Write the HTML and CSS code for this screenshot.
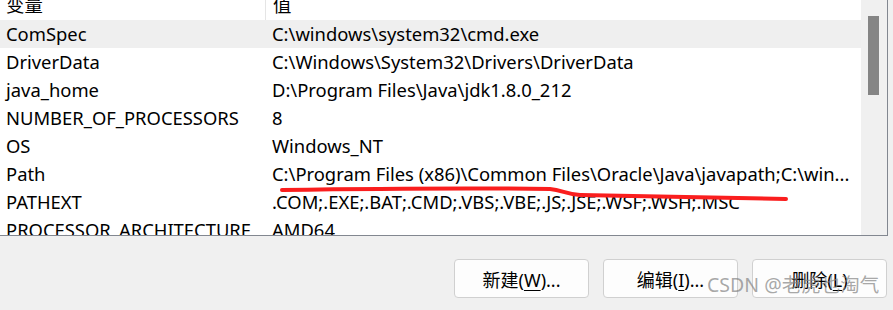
FILE: index.html
```html
<!DOCTYPE html>
<html lang="zh-CN">
<head>
<meta charset="utf-8">
<title>环境变量</title>
<link rel="stylesheet" href="styles.css">
</head>
<body>
<div class="page">
  <div class="listbox">
    <div class="list">
      <div class="row header"><div class="c1">变量</div><div class="c2">值</div></div>
      <div class="row selected"><div class="c1">ComSpec</div><div class="c2">C:\windows\system32\cmd.exe</div></div>
      <div class="row"><div class="c1">DriverData</div><div class="c2">C:\Windows\System32\Drivers\DriverData</div></div>
      <div class="row"><div class="c1">java_home</div><div class="c2">D:\Program Files\Java\jdk1.8.0_212</div></div>
      <div class="row"><div class="c1">NUMBER_OF_PROCESSORS</div><div class="c2">8</div></div>
      <div class="row"><div class="c1">OS</div><div class="c2">Windows_NT</div></div>
      <div class="row"><div class="c1">Path</div><div class="c2">C:\Program Files (x86)\Common Files\Oracle\Java\javapath;C:\win...</div></div>
      <div class="row"><div class="c1">PATHEXT</div><div class="c2">.COM;.EXE;.BAT;.CMD;.VBS;.VBE;.JS;.JSE;.WSF;.WSH;.MSC</div></div>
      <div class="row"><div class="c1">PROCESSOR_ARCHITECTURE</div><div class="c2">AMD64</div></div>
    </div>
    <div class="scrollbar"><div class="thumb"></div></div>
    <svg class="mark" width="893" height="240" viewBox="0 0 893 240">
      <path d="M282 190 C 350 189, 480 188, 550 189 C 562 190, 566 194, 580 195 C 650 196, 720 198, 786 199" fill="none" stroke="#fa1e1e" stroke-width="4" stroke-linecap="round"/>
    </svg>
  </div>
  <div class="buttons">
    <button class="btn">新建(<u>W</u>)...</button>
    <button class="btn">编辑(<u>I</u>)...</button>
    <button class="btn">删除(<u>L</u>)</button>
  </div>
  <div class="watermark">CSDN @老虎也淘气</div>
</div>
</body>
</html>
```
FILE: styles.css
```css
* { box-sizing: border-box; }
html, body { margin: 0; padding: 0; }
body {
  background: #f0f0f0;
  font-family: "Noto Sans", "Noto Sans CJK SC", sans-serif;
  font-size: 18.4px;
  color: #000;
  width: 893px;
  height: 310px;
  overflow: hidden;
}
.page { position: relative; width: 893px; height: 310px; }
.listbox {
  position: relative;
  display: flex;
  width: 888px;
  height: 236px;
  border-right: 1px solid #828790;
  border-bottom: 1px solid #828790;
  overflow: hidden;
  background: #fff;
}
.list {
  width: 861px;
  margin-top: -9px;
  background: #fff;
}
.row {
  display: flex;
  height: 28px;
  line-height: 28px;
  white-space: nowrap;
}
.row.header { height: 29px; line-height: 27px; }
.row.header .c2 { border-left: 1px solid #e5e5e5; }
.row.selected { background: #efefef; }
.c1 { width: 265px; padding-left: 6px; overflow: hidden; }
.c2 { flex: 1; padding-left: 7px; overflow: hidden; }
.scrollbar {
  width: 26px;
  background: #f0f0f0;
  padding: 16px 0 0 7px;
}
.thumb { width: 11px; height: 79px; background: #858585; }
.mark { position: absolute; left: 0; top: 0; pointer-events: none; }
.buttons {
  display: flex;
  padding: 23px 0 0 454px;
  gap: 14px;
}
.btn {
  width: 135px;
  height: 39px;
  border: 1px solid #d0d0d0;
  border-radius: 4px;
  background: #fdfdfd;
  font-family: inherit;
  font-size: 18px;
  color: #000;
  padding: 0;
}
.btn u { text-underline-offset: 3px; }
.watermark {
  position: absolute;
  left: 707px;
  top: 269px;
  font-size: 19.5px;
  color: rgba(130,130,130,0.7);
  white-space: nowrap;
}
```
